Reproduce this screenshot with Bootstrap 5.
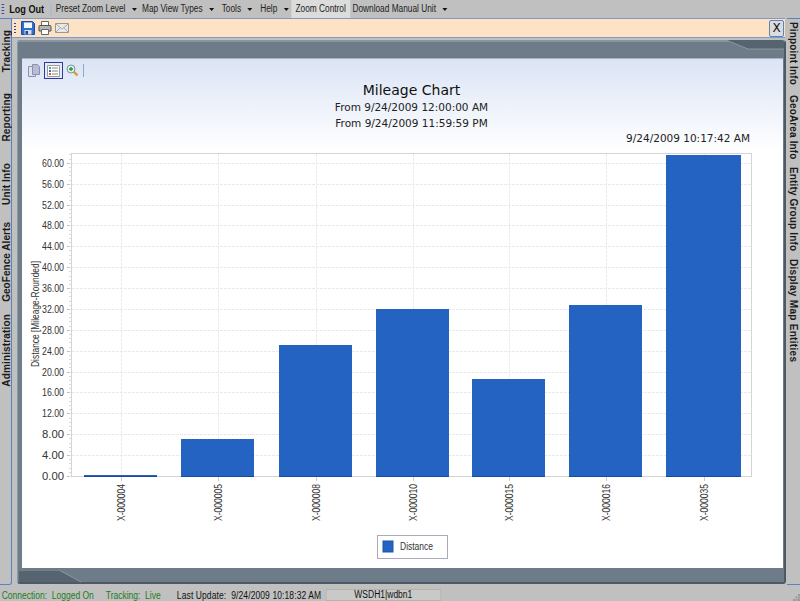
<!DOCTYPE html>
<html lang="en">
<head>
    <meta charset="UTF-8">
    <meta name="viewport" content="width=device-width, initial-scale=1.0">
    <title>Mileage Chart</title>
    <link href="https://cdn.jsdelivr.net/npm/bootstrap@5.3.0/dist/css/bootstrap.min.css" rel="stylesheet">
    <style>
        html, body { width: 800px; height: 601px; overflow: hidden; }
        body { background: #c0c0c0; color: #111; font-family: "Liberation Sans", Arial, sans-serif; font-size: 10px; line-height: 1; }
        .grip { width: 2px; height: 12px; background-image: radial-gradient(circle, #2a4a9a 1px, transparent 1px); background-size: 2px 3px; }

        /* the old app font is tall and narrow, so both bars are squeezed sideways */
        .menubar { height: 18px; width: 800px; padding-left: 2px; transform: scaleX(.83); transform-origin: left; flex: none; }
        .menubar .grip { width: 3px; }
        .logout { font-weight: 700; font-size: 11px; margin: 0 8px 0 6px; }
        .menubar .sep { width: 1px; height: 13px; background: #9db3d6; margin-right: 5px; }
        .menu-item { display: flex; align-items: center; height: 18px; color: #222; }
        .menu-item.active { background: #dcdcdc; padding: 0 5px; }
        .menu-item.wide { margin-left: 3px; }
        .caret { width: 0; height: 0; border: 3.500px solid transparent; border-top-color: #111; border-bottom: 0; margin: 0 6px 0 8px; }
        .caret.last { margin-right: 3px; }

        .stage { height: 567px; flex: none; }
        .side { font-weight: 700; color: #1a1a1a; white-space: nowrap; letter-spacing: .15px; border-top: 1px solid #5b82c0; border-bottom: 1px solid #5b82c0; }
        .side span { writing-mode: vertical-rl; }
        .side-left { width: 12px; border-right: 1px solid #5b82c0; border-bottom-right-radius: 3px; padding-left: 2px; }
        .side-left span { transform: rotate(180deg); }
        .side-right { width: 13px; padding-left: 1px; }
        .tab-track { margin-top: 11px; }
        .tab-report { margin-top: 21px; }
        .tab-unit { margin-top: 21px; }
        .tab-geo { margin-top: 17px; letter-spacing: .05px; }
        .tab-admin { margin-top: 12px; }
        .tab-pin { margin-top: 3px; }
        .tab-area { margin-top: 10px; }
        .tab-group { margin-top: 7px; }
        .tab-map { margin-top: 8px; letter-spacing: .3px; }

        .center { width: 775px; }
        .toolbar { height: 20px; width: 773px; background: #fde3c4; border-top: 1px solid #7b9bcb; border-bottom: 1px solid #7b9bcb; padding-left: 2px; }
        .toolbar .grip { margin-right: 5px; }
        .toolbar svg { margin-right: 3px; }
        .close-x { width: 15px; height: 17px; background: #dcdcdc; border: 1px solid #5f83b5; color: #111; font-family: "DejaVu Sans", sans-serif; font-size: 12px; border-radius: 2px; margin-left: auto; margin-right: 1px; }

        .frame { position: relative; height: 544px; width: 769px; margin: 2px 0 0 5px; background: #6d7c88; border-left: 1px solid #8c98a2; border-top: 2px solid #88949e; border-right: 2px solid #4d5a64; border-bottom: 2px solid #4d5a64; border-radius: 3px; padding: 16px 1px 14px 4px; }
        .frame-notch { position: absolute; }
        .notch-top { top: -2px; right: -2px; }
        .notch-bottom { bottom: -2px; left: -1px; }
        .content { height: 510px; width: 761px; background: linear-gradient(#dbe4f5, #fff 92px, #fff); border-top: 1px solid #aab4c0; }

        .report-tools { height: 24px; padding: 2px 0 3px 6px; }
        .report-tools svg { margin-right: 4px; }
        .tool-on { width: 19px; height: 17px; border: 1.500px solid #2c3a9c; background: #e6ebf5; margin-right: 3px; }
        .tool-on svg { margin: 0; }
        .tool-sep { width: 1px; height: 13px; background: #8ea6c8; margin-left: 1px; }
        .report-head { font-family: "DejaVu Sans", sans-serif; font-size: 10.500px; color: #222; text-align: center; padding-left: 18px; }
        .report-head h1 { font-family: inherit; font-size: 14px; line-height: 14px; font-weight: 400; margin: 0 0 5px; color: #111; }
        .report-head p { margin: 0 0 5px; }
        .run-time { font-family: "DejaVu Sans", sans-serif; font-size: 10.500px; color: #222; text-align: right; padding-right: 33px; }
        .chart { display: block; flex: none; }
        .chart text { font-family: "Liberation Sans", sans-serif; fill: #333; }

        .statusbar { height: 16px; flex: none; }
        .status-info { padding: 4px 0 0 2px; transform: scaleX(.85); transform-origin: left; }
        .status-info .ok, .status-info .last { margin-top: 1px; }
        .status-info .ok { color: #1c7c1c; }
        .status-info .tracking { margin-left: 14px; }
        .status-info .last { margin-left: 19px; margin-right: 5px; letter-spacing: .12px; }
        .status-info .user { width: 136px; height: 12px; background: #c9c9c9; border: 1px solid #b5b5a5; text-align: center; line-height: 10px; }
    </style>
</head>
<body class="d-flex flex-column">
    <!-- Menu bar -->
    <nav class="menubar d-flex align-items-center">
        <span class="grip"></span>
        <span class="logout">Log Out</span>
        <span class="sep"></span>
        <span class="menu-item">Preset Zoom Level<span class="caret"></span></span>
        <span class="menu-item">Map View Types<span class="caret"></span></span>
        <span class="menu-item wide">Tools<span class="caret"></span></span>
        <span class="menu-item wide">Help<span class="caret last"></span></span>
        <span class="menu-item active">Zoom Control</span>
        <span class="menu-item wide">Download Manual Unit<span class="caret"></span></span>
    </nav>

    <div class="stage d-flex">
        <aside class="side side-left d-flex flex-column align-items-start">
            <span class="tab-track">Tracking</span>
            <span class="tab-report">Reporting</span>
            <span class="tab-unit">Unit Info</span>
            <span class="tab-geo">GeoFence Alerts</span>
            <span class="tab-admin">Administration</span>
        </aside>

        <div class="center">
            <!-- Save / print / mail toolbar -->
            <div class="toolbar d-flex align-items-center">
                <span class="grip"></span>
                <svg width="14" height="14" viewBox="0 0 14 14"><path d="M.5.500h11l2 2v11H.5z" fill="#2f6fd0" stroke="#1d4c9c"/><path d="M3 1.500h8v5.500H3z" fill="#f4f7fc"/><path d="M3.500 9h7v4.500h-7z" fill="#d5dcea"/><path d="M4.500 10h2.500v3.500H4.500z" fill="#1d4c9c"/></svg>
                <svg width="14" height="14" viewBox="0 0 14 14"><path d="M3.500.500h7v5h-7z" fill="#fff" stroke="#666"/><path d="M1 5.500q0-1 1-1h10q1 0 1 1V10H1z" fill="#b5b5b5" stroke="#555"/><path d="M3.500 8.500h7v5h-7z" fill="#fff" stroke="#666"/></svg>
                <svg width="14" height="12" viewBox="0 0 14 12"><path d="M.5 1.500h13v9H.5z" fill="#e8e8e8" stroke="#999"/><path d="M1 2l6 5 6-5M1 10l4-4M13 10L9 6" fill="none" stroke="#aaa"/></svg>
                <button class="close-x d-flex align-items-center justify-content-center p-0">X</button>
            </div>

            <div class="frame">
                <!-- corner notches of the frame -->
                <svg class="frame-notch notch-top" width="60" height="11" viewBox="0 0 60 11"><path d="M0 0l22 9h36V2q0-2-2-2z" fill="#56646f"/><path d="M0 0l22 9h36" fill="none" stroke="#8b97a1"/></svg>
                <svg class="frame-notch notch-bottom" width="70" height="14" viewBox="0 0 70 14"><path d="M2 0h40l22 12H4q-2 0-2-2z" fill="#56646f"/><path d="M2 0h40l22 12" fill="none" stroke="#8b97a1"/></svg>
                <div class="content d-flex flex-column">
                    <div class="report-tools d-flex align-items-center">
                        <svg width="12" height="13" viewBox="0 0 12 13"><path d="M.5 2.500h7v10h-7z" fill="#dfe3ee" stroke="#8d90ad"/><path d="M4.500.500h5l2 2v8h-7z" fill="#b9bcd6" stroke="#8d90ad"/></svg>
                        <span class="tool-on d-flex align-items-center justify-content-center">
                            <svg width="13" height="12" viewBox="0 0 13 12"><path d="M.5.500h12v11H.5z" fill="#fff" stroke="#9a9a9a"/><path d="M2 2h2v2H2z" fill="#4caf50"/><path d="M2 5h2v2H2z" fill="#2f6fd0"/><path d="M2 8h2v2H2z" fill="#e0552b"/><path d="M5 3h6M5 6h6M5 9h6" stroke="#888"/></svg>
                        </span>
                        <svg width="12" height="13" viewBox="0 0 12 13"><path d="M7.500 7.500l4 4" stroke="#e09a2c" stroke-width="2.400"/><circle cx="5" cy="5" r="4" fill="#dff0e6" stroke="#7d93a8"/><path d="M3 5h4M5 3v4" stroke="#1f9a3c" stroke-width="1.300"/></svg>
                        <span class="tool-sep"></span>
                    </div>
                    <header class="report-head">
                        <h1>Mileage Chart</h1>
                        <p>From 9/24/2009 12:00:00 AM</p>
                        <p>From 9/24/2009 11:59:59 PM</p>
                    </header>
                    <div class="run-time">9/24/2009 10:17:42 AM</div>
                    <svg class="chart mt-auto" id="mileageChart" width="761" height="423" viewBox="22 145 761 423"></svg>
                </div>
            </div>
        </div>

        <aside class="side side-right d-flex flex-column align-items-start">
            <span class="tab-pin">Pinpoint Info</span>
            <span class="tab-area">GeoArea Info</span>
            <span class="tab-group">Entity Group Info</span>
            <span class="tab-map">Display Map Entities</span>
        </aside>
    </div>

    <footer class="statusbar d-flex">
        <div class="status-info d-flex align-items-center">
            <span class="ok">Connection:&nbsp; Logged On</span>
            <span class="ok tracking">Tracking:&nbsp; Live</span>
            <span class="last">Last Update:&nbsp; 9/24/2009 10:18:32 AM</span>
            <span class="user">WSDH1|wdbn1</span>
        </div>
        <svg class="ms-auto mt-auto" width="7" height="7" viewBox="0 0 7 7"><path d="M5 0h2v2H5zM2.500 2.500h2v2h-2zM5 2.500h2v2H5zM0 5h2v2H0zM2.500 5h2v2h-2zM5 5h2v2H5z" fill="#9a9a9a"/></svg>
    </footer>

    <script>
        // Build the mileage bar chart from the values
        const bars = [
            { name: 'X-000004', left: 84, right: 157, value: 0.1 },
            { name: 'X-000005', left: 181, right: 254, value: 7.1 },
            { name: 'X-000008', left: 279, right: 352, value: 25.1 },
            { name: 'X-000010', left: 376, right: 449, value: 32 },
            { name: 'X-000015', left: 472, right: 545, value: 18.6 },
            { name: 'X-000016', left: 569, right: 642, value: 32.8 },
            { name: 'X-000035', left: 666, right: 741, value: 61.4 }
        ];
        const yOf = v => 476 - v * 5.22;
        let out = '';

        // plot border
        out += '<rect x="71.500" y="153.500" width="680" height="323" fill="#fff" stroke="#d4d4d4"/>';

        // horizontal grid + labels
        for (let v = 0; v <= 60; v += 4) {
            const y = Math.round(yOf(v)) + 0.5;
            if (v > 0) out += `<line x1="72" x2="751" y1="${y}" y2="${y}" stroke="#eaeaea" stroke-dasharray="3 1"/>`;
            out += `<line x1="67" x2="71" y1="${y}" y2="${y}" stroke="#bbb"/>`;
            out += `<text x="64" y="${y + 3.5}" font-size="10" text-anchor="end" textLength="22" lengthAdjust="spacingAndGlyphs">${v.toFixed(2)}</text>`;
        }
        // minor ticks
        for (let v = 0; v < 62; v += 0.8) {
            const y = Math.round(yOf(v)) + 0.5;
            out += `<line x1="69" x2="71" y1="${y}" y2="${y}" stroke="#dcdcdc"/>`;
        }

        // bars, vertical grid, category labels
        bars.forEach(bar => {
            const mid = Math.round((bar.left + bar.right) / 2) + 0.5;
            out += `<line x1="${mid}" x2="${mid}" y1="154" y2="476" stroke="#eaeaea" stroke-dasharray="3 1"/>`;
            out += `<line x1="${mid}" x2="${mid}" y1="477" y2="481" stroke="#ccc"/>`;
            out += `<text transform="translate(${mid + 3},521) rotate(-90)" font-size="10" textLength="37" lengthAdjust="spacingAndGlyphs">${bar.name}</text>`;
        });
        bars.forEach(bar => {
            const top = Math.round(yOf(bar.value));
            out += `<rect x="${bar.left}" y="${top}" width="${bar.right - bar.left}" height="${477 - top}" fill="#2463c1"/>`;
            out += `<line x1="${bar.left}" x2="${bar.right}" y1="476.500" y2="476.500" stroke="#174a9c"/>`;
        });

        // axis title
        out += '<text transform="translate(38.500,367) rotate(-90)" font-size="10" textLength="106" lengthAdjust="spacingAndGlyphs">Distance [Mileage-Rounded]</text>';

        // legend
        out += '<rect x="377.500" y="535.500" width="70" height="23" fill="#fff" stroke="#aab"/>';
        out += '<rect x="383" y="541" width="10" height="11" fill="#2463c1" stroke="#1c55ad"/>';
        out += '<text x="400" y="550" font-size="10" textLength="33" lengthAdjust="spacingAndGlyphs">Distance</text>';

        document.getElementById('mileageChart').innerHTML = out;
    </script>
</body>
</html>
